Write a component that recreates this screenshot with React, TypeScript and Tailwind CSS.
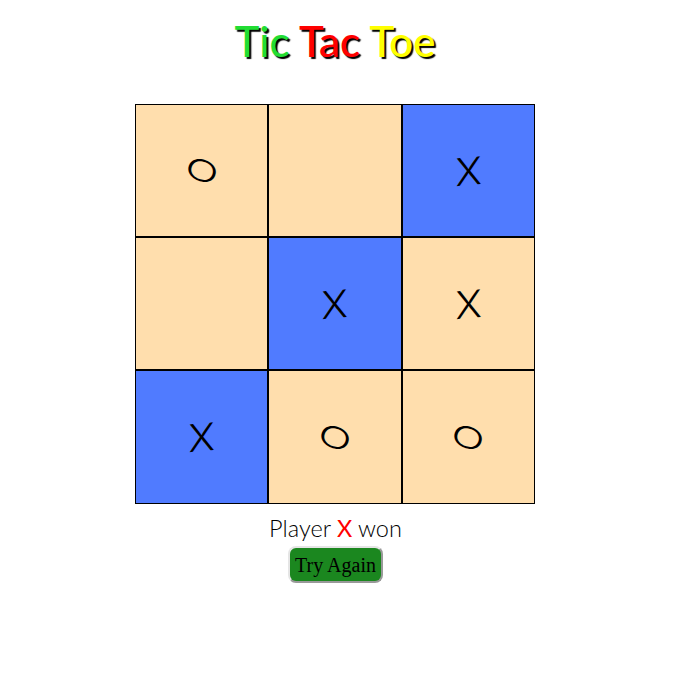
import React from 'react';

type Mark = 'X' | 'O' | '';

const board: { mark: Mark; won?: boolean }[] = [
  { mark: 'O' },
  { mark: '' },
  { mark: 'X', won: true },
  { mark: '' },
  { mark: 'X', won: true },
  { mark: 'X' },
  { mark: 'X', won: true },
  { mark: 'O' },
  { mark: 'O' },
];

const Cell = ({ mark, won }: { mark: Mark; won?: boolean }) => (
  <div className={`flex items-center justify-center border border-black ${won ? 'bg-[#507bff]' : 'bg-[#ffdead]'}`}>
    {mark === 'X' && (
      <span className="font-['Inter',sans-serif] font-light text-[38px] leading-none text-black -rotate-[5deg] -skew-x-[4deg] scale-x-[1.06]">
        X
      </span>
    )}
    {mark === 'O' && (
      <span className="font-['Inter',sans-serif] font-light text-[37px] leading-none text-black rotate-[22deg] scale-x-[1.2] scale-y-[0.78]">
        O
      </span>
    )}
  </div>
);

export default function App() {
  return (
    <div className="flex h-[680px] w-[670px] flex-col items-center bg-white">
      <h1 className="mt-[21px] mb-[43px] h-[40px] font-['Lato',sans-serif] text-[42px] font-medium leading-[40px] [text-shadow:2px_2px_1px_#000]">
        <span className="text-[#22dd33]">Tic</span> <span className="text-[#ff0000]">Tac</span>{' '}
        <span className="text-[#ffff00]">Toe</span>
      </h1>
      <div className="grid h-[400px] w-[400px] grid-cols-3 grid-rows-[133px_133px_134px]">
        {board.map((cell, i) => (
          <Cell key={i} mark={cell.mark} won={cell.won} />
        ))}
      </div>
      <p className="mt-[10px] ml-[1px] h-[28px] font-['Lato',sans-serif] text-[23.5px] font-light leading-[28px] text-black">
        Player <span className="font-normal text-[#ff0000]">X</span> won
      </p>
      <button className="mt-[4px] ml-[1px] h-[37px] w-[95px] rounded-lg border-2 border-t-[#e5e5e5] border-l-[#e5e5e5] border-r-[#999999] border-b-[#999999] bg-[#1b871f] font-['Liberation_Serif',serif] text-[20px] leading-none text-black">
        Try Again
      </button>
    </div>
  );
}
